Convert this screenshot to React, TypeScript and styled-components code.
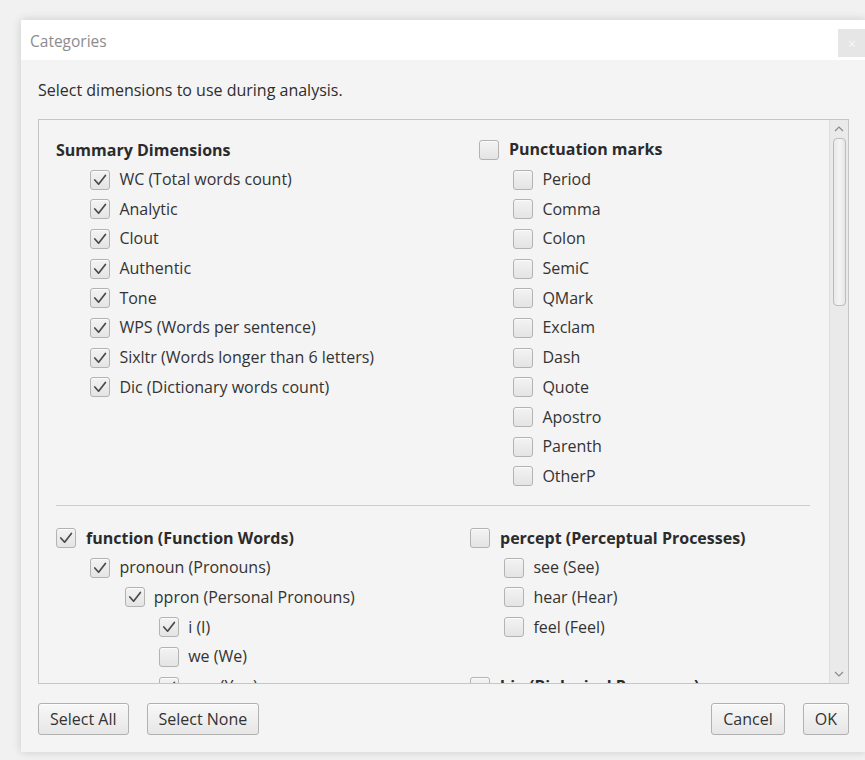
import React from "react";
import styled, { createGlobalStyle } from "styled-components";

const GlobalStyles = createGlobalStyle`
  * {
    box-sizing: border-box;
  }
  body {
    margin: 0;
    padding: 0;
    background: #f1f1f1;
    font-family: 'Open Sans', 'Noto Sans', sans-serif;
    color: #333;
    overflow: hidden;
  }
`;

const Page = styled.div`
  height: 760px;
  padding: 20px 0 0 21px;
`;

const Dialog = styled.div`
  width: 845px;
  height: 732px;
  background: #f4f4f4;
  box-shadow: 0 0 9px rgba(0, 0, 0, 0.16);
  display: flex;
  flex-direction: column;
`;

const TitleBar = styled.div`
  height: 40px;
  background: #fff;
  display: flex;
  justify-content: space-between;
  align-items: center;
  padding-left: 9px;
  flex-shrink: 0;
`;

const Title = styled.span`
  font-size: 15.5px;
  color: #8c8c8c;
  margin-top: 2px;
`;

const CloseButton = styled.div`
  width: 28px;
  height: 28px;
  margin-top: 6px;
  background: #e6e6e6;
  color: #f8f8f8;
  font-size: 14px;
  display: flex;
  align-items: center;
  justify-content: center;
`;

const Body = styled.div`
  flex: 1;
  display: flex;
  flex-direction: column;
  padding: 0 17px 17px 17px;
  min-height: 0;
`;

const Prompt = styled.div`
  font-size: 16px;
  height: 59px;
  display: flex;
  align-items: center;
  color: #2e2e2e;
`;

const ScrollPane = styled.div`
  height: 565px;
  border: 1px solid #c6c6c6;
  display: flex;
  overflow: hidden;
`;

const Viewport = styled.div`
  flex: 1;
  overflow: hidden;
  padding: 15px 19px 0 17px;
`;

const Section = styled.div<{ $split: number }>`
  display: grid;
  grid-template-columns: ${(p) => p.$split}px 1fr;
`;

const Column = styled.div`
  display: flex;
  flex-direction: column;
`;

const Row = styled.div<{ $level: number }>`
  height: 29.7px;
  display: flex;
  align-items: center;
  padding-left: ${(p) => p.$level * 34.4}px;
  flex-shrink: 0;
`;

const Label = styled.span<{ $bold?: boolean }>`
  font-size: 16px;
  line-height: 20px;
  font-weight: ${(p) => (p.$bold ? 700 : 400)};
  color: ${(p) => (p.$bold ? "#2b2b2b" : "#333")};
  margin-left: ${(p) => (p.$bold ? 10 : 9)}px;
  margin-top: -1px;
  white-space: nowrap;
`;

const BoldHeading = styled.span`
  font-size: 16px;
  line-height: 20px;
  font-weight: 700;
  color: #2b2b2b;
  white-space: nowrap;
`;

const Box = styled.span`
  width: 20px;
  height: 20px;
  border: 1px solid #b3b3b3;
  border-radius: 3px;
  background: linear-gradient(#f3f3f3, #e4e4e4);
  box-shadow: inset 0 1px 0 #fbfbfb;
  display: flex;
  align-items: center;
  justify-content: center;
  flex-shrink: 0;
`;

const Divider = styled.hr`
  border: none;
  border-top: 1px solid #cdcdcd;
  margin: 14px 0 17px 0;
`;

const ScrollBar = styled.div`
  width: 19px;
  background: #eaeaea;
  border-left: 1px solid #dedede;
  display: flex;
  flex-direction: column;
  align-items: center;
  padding: 2px 0;
`;

const Arrow = styled.div`
  height: 14px;
  display: flex;
  align-items: center;
  justify-content: center;
`;

const Thumb = styled.div`
  width: 13px;
  height: 168px;
  border: 1px solid #bcbcbc;
  border-radius: 4px;
  background: linear-gradient(90deg, #e9e9e9, #f4f4f4 50%, #e6e6e6);
  margin-top: 2px;
`;

const Track = styled.div`
  flex: 1;
`;

const Footer = styled.div`
  display: flex;
  align-items: center;
  gap: 18px;
  margin-top: 19px;
`;

const Spacer = styled.div`
  flex: 1;
`;

const Button = styled.button`
  height: 32px;
  padding: 0 11px;
  font-family: inherit;
  font-size: 16px;
  line-height: 20px;
  white-space: nowrap;
  color: #333;
  border: 1px solid #b1b1b1;
  border-radius: 3px;
  background: linear-gradient(#f8f8f8, #e6e6e6);
  box-shadow: inset 0 1px 0 #fdfdfd;
`;

type Item = { label: string; level: number; checked?: boolean; box?: boolean; bold?: boolean; blank?: boolean };

const summary: Item[] = [
  { label: "Summary Dimensions", level: 0, bold: true, box: false },
  { label: "WC (Total words count)", level: 1, checked: true },
  { label: "Analytic", level: 1, checked: true },
  { label: "Clout", level: 1, checked: true },
  { label: "Authentic", level: 1, checked: true },
  { label: "Tone", level: 1, checked: true },
  { label: "WPS (Words per sentence)", level: 1, checked: true },
  { label: "Sixltr (Words longer than 6 letters)", level: 1, checked: true },
  { label: "Dic (Dictionary words count)", level: 1, checked: true },
];

const punctuation: Item[] = [
  { label: "Punctuation marks", level: 0, bold: true },
  ...["Period", "Comma", "Colon", "SemiC", "QMark", "Exclam", "Dash", "Quote", "Apostro", "Parenth", "OtherP"].map(
    (label) => ({ label, level: 1 })
  ),
];

const functionWords: Item[] = [
  { label: "function (Function Words)", level: 0, bold: true, checked: true },
  { label: "pronoun (Pronouns)", level: 1, checked: true },
  { label: "ppron (Personal Pronouns)", level: 2, checked: true },
  { label: "i (I)", level: 3, checked: true },
  { label: "we (We)", level: 3 },
  { label: "you (You)", level: 3, checked: true },
];

const perceptual: Item[] = [
  { label: "percept (Perceptual Processes)", level: 0, bold: true },
  { label: "see (See)", level: 1 },
  { label: "hear (Hear)", level: 1 },
  { label: "feel (Feel)", level: 1 },
  { label: "", level: 0, blank: true },
  { label: "bio (Biological Processes)", level: 0, bold: true },
];

const Check = () => (
  <svg width="16" height="16" viewBox="0 0 16 16">
    <path d="M2.8 8 L6.6 12.2 L13.4 3.4" fill="none" stroke="#4a4a4a" strokeWidth="1.7" strokeLinecap="round" strokeLinejoin="round" />
  </svg>
);

const Chevron = ({ up }: { up?: boolean }) => (
  <svg width="10" height="6" viewBox="0 0 10 6">
    <path d={up ? "M1 5 L5 1 L9 5" : "M1 1 L5 5 L9 1"} fill="none" stroke="#8a8a8a" strokeWidth="1.2" />
  </svg>
);

const ItemList = ({ items }: { items: Item[] }) => (
  <Column>
    {items.map((it, i) =>
      it.blank ? (
        <Row key={i} $level={0} />
      ) : (
        <Row key={i} $level={it.level}>
          {it.box === false ? (
            <BoldHeading>{it.label}</BoldHeading>
          ) : (
            <>
              <Box>{it.checked && <Check />}</Box>
              <Label $bold={it.bold}>{it.label}</Label>
            </>
          )}
        </Row>
      )
    )}
  </Column>
);

export default function App() {
  return (
    <Page>
      <GlobalStyles />
      <Dialog>
        <TitleBar>
          <Title>Categories</Title>
          <CloseButton>×</CloseButton>
        </TitleBar>
        <Body>
          <Prompt>Select dimensions to use during analysis.</Prompt>
          <ScrollPane>
            <Viewport>
              <Section $split={423}>
                <ItemList items={summary} />
                <ItemList items={punctuation} />
              </Section>
              <Divider />
              <Section $split={414}>
                <ItemList items={functionWords} />
                <ItemList items={perceptual} />
              </Section>
            </Viewport>
            <ScrollBar>
              <Arrow>
                <Chevron up />
              </Arrow>
              <Thumb />
              <Track />
              <Arrow>
                <Chevron />
              </Arrow>
            </ScrollBar>
          </ScrollPane>
          <Footer>
            <Button>Select All</Button>
            <Button>Select None</Button>
            <Spacer />
            <Button>Cancel</Button>
            <Button>OK</Button>
          </Footer>
        </Body>
      </Dialog>
    </Page>
  );
}
